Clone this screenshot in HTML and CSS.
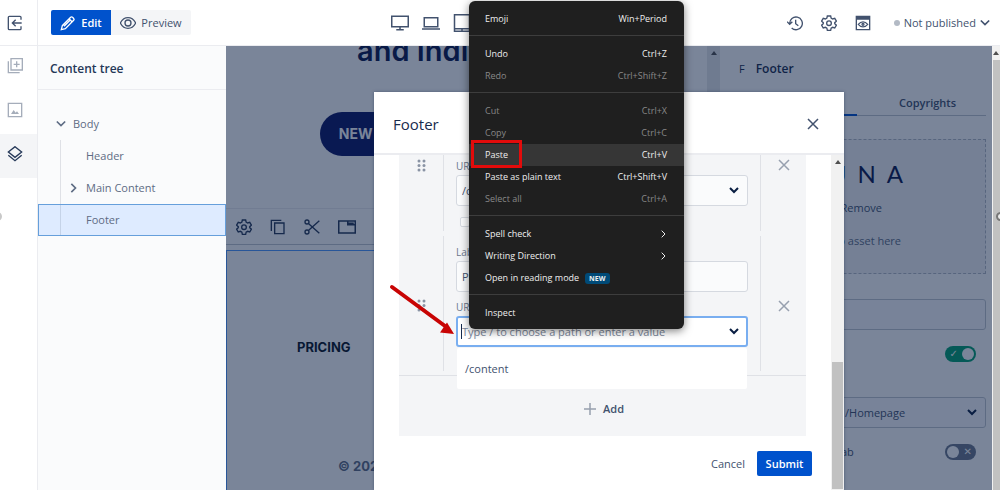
FILE: index.html
```
<!DOCTYPE html>
<html lang="en">
<head>
    <meta charset="utf-8">
    <title>Content editor</title>
    <link rel="stylesheet" href="styles.css">
</head>
<body>
<div class="app">
    <header class="topbar">
        <div class="topbar-exit">
            <button class="icon-btn" aria-label="Exit">
                <svg class="icon" viewBox="0 0 24 24"><path d="M21 7V3.500a1.500 1.500 0 0 0-1.500-1.500H3.500A1.500 1.500 0 0 0 2 3.500v17A1.500 1.500 0 0 0 3.500 22h16a1.500 1.500 0 0 0 1.500-1.500V17M22 12H8M13 7l-5 5 5 5"/></svg>
            </button>
        </div>
        <div class="mode">
            <button class="mode-btn active">
                <svg class="icon" viewBox="0 0 24 24"><path d="M2 22l1.500-6L16 3.500a2 2 0 0 1 2.800 0l1.700 1.700a2 2 0 0 1 0 2.800L8 20.500zM14 6l4 4M6 17l9-9"/></svg>
                Edit
            </button>
            <button class="mode-btn">
                <svg class="icon" viewBox="0 0 24 24"><path d="M0.500 12C3 7 7 4 12 4s9 3 11.500 8c-2.500 5-6.500 8-11.500 8S3 17 .5 12z"/><circle cx="12" cy="12" r="4.500"/></svg>
                Preview
            </button>
        </div>
        <div class="devices">
            <button class="icon-btn" aria-label="Desktop"><svg class="icon big" viewBox="0 0 24 24"><path d="M1 3h22v14H1zM12 17v4M7 21h10"/></svg></button>
            <button class="icon-btn" aria-label="Laptop"><svg class="icon big" viewBox="0 0 24 24"><path d="M3 5h18v12H3zM0 20h24"/></svg></button>
            <button class="icon-btn" aria-label="Tablet"><svg class="icon big" viewBox="0 0 24 24"><path d="M2 1h20v22H2zM2 19.500h20M11 21h2"/></svg></button>
        </div>
        <div class="actions">
            <button class="icon-btn" aria-label="History"><svg class="icon" viewBox="0 0 24 24"><path d="M4 13a9.500 9.500 0 1 1 3 6.500M0 10l4 4 4-4M13 7v6l4 3"/></svg></button>
            <button class="icon-btn" aria-label="Settings"><svg class="icon" viewBox="0 0 24 24"><use href="#gear"/></svg></button>
            <button class="icon-btn" aria-label="View"><svg class="icon" viewBox="0 0 24 24"><path d="M2 2h20v20H2zM2 4h20M2 6h20M5 14c4-5 10-5 14 0-4 5-10 5-14 0z"/><circle cx="12" cy="14" r="1.500"/></svg></button>
            <button class="status"><span class="dot"></span>Not published
                <svg class="icon chevron" viewBox="0 0 12 12"><path d="M1 3l5 5 5-5"/></svg>
            </button>
        </div>
    </header>

    <div class="workspace">
        <nav class="rail">
            <button class="rail-btn" aria-label="Components"><svg class="icon" viewBox="0 0 24 24"><path d="M6 1h17v17H6zM2 5v17h17M14.500 5v9M10 9.500h9"/></svg></button>
            <button class="rail-btn" aria-label="Assets"><svg class="icon" viewBox="0 0 24 24"><path d="M2 2h20v20H2z"/><path class="solid" d="M6 18l4-6 3 4 2-2 3 4z"/></svg></button>
            <button class="rail-btn active" aria-label="Content tree"><svg class="icon" viewBox="0 0 24 24"><path d="M12 1l10 8-10 8L2 9zM2 14l10 8 10-8"/></svg></button>
            <span class="grip grip-left"></span>
        </nav>

        <aside class="tree">
            <h2 class="tree-title">Content tree</h2>
            <ul class="tree-list">
                <li class="tree-item root"><svg class="icon chevron" viewBox="0 0 12 12"><path d="M1 3l5 5 5-5"/></svg>Body</li>
                <li class="tree-item">Header</li>
                <li class="tree-item"><svg class="icon chevron" viewBox="0 0 12 12"><path d="M4 1l5 5-5 5"/></svg>Main Content</li>
                <li class="tree-item selected">Footer</li>
            </ul>
        </aside>

        <main class="stage">
            <section class="canvas">
                <h1 class="hero-title">and Indivi</h1>
                <a class="hero-link" href="#">NEW</a>
                <div class="tools">
                    <button class="icon-btn" aria-label="Edit"><svg class="icon" viewBox="0 0 24 24"><use href="#gear"/></svg></button>
                    <button class="icon-btn" aria-label="Copy"><svg class="icon" viewBox="0 0 24 24"><path d="M7 6h14v16H7zM2 18V2h15"/></svg></button>
                    <button class="icon-btn" aria-label="Cut"><svg class="icon" viewBox="0 0 24 24"><circle cx="4.500" cy="4.500" r="3"/><circle cx="4.500" cy="19.500" r="3"/><path d="M7 7l16 14.500M7 17L23 2.500"/></svg></button>
                    <button class="icon-btn" aria-label="Panel"><svg class="icon big" viewBox="0 0 24 24"><path d="M1 4h22v16H1zM13 5v4h9M14 7h7"/></svg></button>
                </div>
                <div class="page-footer">
                    <a class="footer-link" href="#">PRICING</a>
                    <p class="copyright">© 202</p>
                </div>
            </section>
            <div class="scrollbar canvas-scroll"><i class="arrow-up"></i></div>
            <section class="panel">
                <h2 class="panel-title"><span class="panel-type">F</span>Footer</h2>
                <div class="tabs">
                    <span class="tab active"></span>
                    <button class="tab">Copyrights</button>
                </div>
                <div class="dropzone">
                    <div class="wordmark"><span>U</span><span>N</span><span>A</span></div>
                    <button class="remove">Remove</button>
                    <p class="drop-hint">drop asset here</p>
                </div>
                <input class="panel-field" type="text" aria-label="Title">
                <label class="switch-row first"><input class="switch" type="checkbox" checked aria-label="Show logo"></label>
                <span class="select-wrap">
                    <select class="panel-field indent" aria-label="Logo link"><option>/Homepage</option></select>
                    <svg class="icon select-arrow" viewBox="0 0 12 12"><path d="M2 4l4 4 4-4"/></svg>
                </span>
                <label class="switch-row">tab<input class="switch" type="checkbox"></label>
            </section>

            <div class="overlay">
                <div class="modal" role="dialog" aria-label="Footer">
                    <header class="modal-head">
                        <h2 class="modal-title">Footer</h2>
                        <button class="icon-btn" aria-label="Close"><svg class="icon close" viewBox="0 0 12 12"><path d="M1 1l10 10M11 1L1 11"/></svg></button>
                    </header>
                    <div class="modal-body">
                        <form class="modal-form">
                            <div class="group">
                                <div class="link-row cut">
                                    <div class="handle"><svg class="dots" viewBox="0 0 9 13"><use href="#dots"/></svg></div>
                                    <div class="fields">
                                        <label class="field-label" for="url-1">URL</label>
                                        <span class="select-wrap">
                                            <select class="field" id="url-1"><option>/content</option></select>
                                            <svg class="icon select-arrow" viewBox="0 0 12 12"><path d="M2 4l4 4 4-4"/></svg>
                                        </span>
                                        <input class="tick" type="checkbox" aria-label="Open in new tab">
                                    </div>
                                    <button type="button" class="delete" aria-label="Delete"><svg class="icon close" viewBox="0 0 12 12"><path d="M1 1l10 10M11 1L1 11"/></svg></button>
                                </div>
                                <div class="link-row">
                                    <div class="handle"><svg class="dots" viewBox="0 0 9 13"><use href="#dots"/></svg></div>
                                    <div class="fields">
                                        <label class="field-label" for="label-2">Label</label>
                                        <input class="field" id="label-2" type="text" value="Pricing">
                                        <label class="field-label second" for="url-2">URL</label>
                                        <span class="select-wrap focus">
                                            <input class="field" id="url-2" type="text" placeholder="Type / to choose a path or enter a value">
                                            <svg class="icon select-arrow" viewBox="0 0 12 12"><path d="M2 4l4 4 4-4"/></svg>
                                            <span class="suggestions">/content</span>
                                        </span>
                                    </div>
                                    <button type="button" class="delete" aria-label="Delete"><svg class="icon close" viewBox="0 0 12 12"><path d="M1 1l10 10M11 1L1 11"/></svg></button>
                                </div>
                                <button type="button" class="add"><svg class="icon close" viewBox="0 0 12 12"><path d="M6 0v12M0 6h12"/></svg>Add</button>
                            </div>
                            <div class="modal-actions">
                                <button type="button" class="cancel">Cancel</button>
                                <button type="button" class="submit">Submit</button>
                            </div>
                        </form>
                        <div class="scrollbar modal-scroll"><i class="arrow-up"></i><i class="thumb"></i></div>
                    </div>
                </div>
            </div>
        </main>
        <div class="scrollbar window-scroll"><i class="arrow-up"></i><i class="thumb"></i><span class="grip grip-right"></span></div>
    </div>
</div>

<svg class="pointer" viewBox="0 0 70 55">
    <path class="pointer-line" d="M5 6L58 45"/>
    <path class="pointer-head" d="M67 53L53 51.500 60 41.500z"/>
</svg>

<ul class="menu">
    <li class="menu-item">Emoji<kbd>Win+Period</kbd></li>
    <li class="menu-sep"></li>
    <li class="menu-item">Undo<kbd>Ctrl+Z</kbd></li>
    <li class="menu-item off">Redo<kbd>Ctrl+Shift+Z</kbd></li>
    <li class="menu-sep"></li>
    <li class="menu-item off">Cut<kbd>Ctrl+X</kbd></li>
    <li class="menu-item off">Copy<kbd>Ctrl+C</kbd></li>
    <li class="menu-item hover">Paste<kbd>Ctrl+V</kbd><span class="marker"></span></li>
    <li class="menu-item">Paste as plain text<kbd>Ctrl+Shift+V</kbd></li>
    <li class="menu-item off">Select all<kbd>Ctrl+A</kbd></li>
    <li class="menu-sep"></li>
    <li class="menu-item">Spell check<svg class="icon menu-arrow" viewBox="0 0 12 12"><path d="M4 1l5 5-5 5"/></svg></li>
    <li class="menu-item">Writing Direction<svg class="icon menu-arrow" viewBox="0 0 12 12"><path d="M4 1l5 5-5 5"/></svg></li>
    <li class="menu-item">Open in reading mode<span class="badge">NEW</span></li>
    <li class="menu-sep"></li>
    <li class="menu-item">Inspect</li>
</ul>

<svg class="defs" aria-hidden="true">
    <defs>
        <g id="gear">
            <path d="M9.500 1.500h5l.7 3.200 2.200 1.300 3.200-1 2.500 4.200-2.500 2.300v1.500l2.500 2.300-2.500 4.200-3.200-1-2.200 1.300-.7 3.200h-5l-.7-3.200L6.600 18.500l-3.200 1-2.500-4.200L3.400 13v-1.500L.9 9.200 3.400 5l3.200 1 2.200-1.300z"/>
            <circle cx="12" cy="12.300" r="3.500"/>
        </g>
        <g id="dots">
            <circle cx="2" cy="2" r="1.500"/><circle cx="7" cy="2" r="1.500"/>
            <circle cx="2" cy="6.500" r="1.500"/><circle cx="7" cy="6.500" r="1.500"/>
            <circle cx="2" cy="11" r="1.500"/><circle cx="7" cy="11" r="1.500"/>
        </g>
    </defs>
</svg>
</body>
</html>
```
FILE: styles.css
```
* {
    box-sizing: border-box;
}

body {
    margin: 0;
    font: 11px/16px "Open Sans", "Noto Sans", sans-serif;
    color: #42526e;
    background: #fff;
    overflow: hidden;
}

h1, h2, p, ul {
    margin: 0;
    padding: 0;
    list-style: none;
}

button, input, select {
    font: inherit;
    color: inherit;
    border: 0;
    padding: 0;
    background: none;
}

.app {
    display: flex;
    flex-direction: column;
    height: 100vh;
}

.icon {
    display: block;
    width: 16px;
    height: 16px;
    flex: none;
    fill: none;
    stroke: currentColor;
    stroke-width: 2;
}

.icon.big {
    width: 18px;
    height: 18px;
}

.icon.chevron {
    width: 10px;
    height: 10px;
}

.icon.close {
    width: 12px;
    height: 12px;
    stroke-width: 1.500;
}

.icon .solid {
    fill: currentColor;
    stroke: none;
}

.icon-btn {
    display: flex;
}

.defs {
    position: absolute;
    width: 0;
    height: 0;
}

/* top bar */
.topbar {
    display: flex;
    align-items: center;
    flex: none;
    height: 46px;
    border-bottom: 1px solid #ebecf0;
}

.topbar-exit {
    display: flex;
    align-items: center;
    align-self: stretch;
    width: 38px;
    padding-left: 7px;
    border-right: 1px solid #ebecf0;
}

.mode {
    display: flex;
    margin-left: 13px;
    border-radius: 2px;
    overflow: hidden;
}

.mode-btn {
    display: flex;
    align-items: center;
    justify-content: center;
    gap: 5px;
    width: 80px;
    height: 25px;
    background: #f4f5f7;
}

.mode-btn.active {
    width: 60px;
    font-weight: 600;
    color: #fff;
    background: #0052cc;
}

.devices {
    display: flex;
    gap: 13px;
    margin-left: 200px;
}

.actions {
    display: flex;
    align-items: center;
    gap: 18px;
    margin-left: auto;
    padding-right: 10px;
}

.status {
    display: flex;
    align-items: center;
    gap: 4px;
    margin-left: 5px;
}

.dot {
    width: 6px;
    height: 6px;
    border-radius: 50%;
    background: #b3bac5;
}

.workspace {
    display: flex;
    flex: 1;
    min-height: 0;
}

/* left rail */
.rail {
    position: relative;
    flex: none;
    width: 38px;
    border-right: 1px solid #ebecf0;
}

.rail-btn {
    display: flex;
    align-items: center;
    width: 100%;
    height: 44px;
    padding: 0 0 4px 7px;
    color: #a5adba;
}

.rail-btn.active {
    color: #253858;
    background: #f4f5f7;
}

.grip {
    position: absolute;
    top: 166px;
    width: 9px;
    height: 9px;
    border: 2px solid #c8c8c8;
    border-radius: 50%;
    background: #eee;
}

.grip-left {
    left: -7px;
}

.grip-right {
    right: -5px;
    border-color: #777;
}

/* content tree */
.tree {
    flex: none;
    width: 188px;
    background: #fafbfc;
}

.tree-title {
    height: 44px;
    padding-left: 12px;
    border-bottom: 1px solid #ebecf0;
    font-size: 12px;
    line-height: 46px;
    font-weight: 600;
    color: #253858;
}

.tree-list {
    padding-top: 18px;
    color: #5e6c84;
}

.tree-item {
    position: relative;
    display: flex;
    align-items: center;
    height: 32px;
    padding-left: 48px;
}

.tree-item.root {
    padding-left: 18px;
    gap: 7px;
}

.tree-item:not(.root)::before {
    content: "";
    position: absolute;
    left: 22px;
    top: 0;
    bottom: 0;
    border-left: 1px solid #dfe1e6;
}

.tree-item:not(.root) .chevron {
    margin-left: -18px;
    margin-right: 8px;
}

.tree-item.selected {
    padding-left: 47px;
    border: 1px solid #669fdb;
    background: #deebff;
}

.tree-item.selected::before {
    left: 21px;
    border-color: #c5d3e8;
}

/* page preview */
.stage {
    position: relative;
    display: flex;
    flex: 1;
    min-width: 0;
    overflow: hidden;
}

.canvas {
    display: flex;
    flex-direction: column;
    flex: 1;
    min-width: 0;
    font-family: Inter, "Open Sans", sans-serif;
    font-weight: 700;
}

.hero-title {
    margin-top: -15px;
    padding-left: 131px;
    font-size: 29px;
    line-height: 40px;
    font-weight: 600;
    white-space: nowrap;
    color: #09164e;
}

.hero-link {
    width: 61%;
    height: 44px;
    margin: 41px auto 0;
    padding-left: 19px;
    border-radius: 22px;
    font-size: 14px;
    line-height: 44px;
    color: #fff;
    text-decoration: none;
    background: #0a1464;
}

.tools {
    display: flex;
    align-items: center;
    gap: 18px;
    height: 37px;
    margin-top: 52px;
    padding-left: 10px;
    border-top: 1px solid #ebecf0;
    border-bottom: 1px solid #c1c7d0;
    color: #253858;
}

.page-footer {
    flex: 1;
    margin-top: 5px;
    border-top: 1px solid #4c9aff;
    border-left: 1px solid #4c9aff;
    font-size: 13px;
    color: #172b4d;
}

.footer-link {
    display: block;
    margin: 88px 0 0 70px;
    color: #071323;
    text-decoration: none;
}

.copyright {
    margin: 103px 0 0 111px;
    color: #5e6c84;
}

.scrollbar {
    position: relative;
    display: flex;
    flex-direction: column;
    align-items: center;
    flex: none;
    width: 13px;
    background: #f1f1f1;
}

.arrow-up {
    margin: 5px 0;
    border: 3px solid transparent;
    border-top: 0;
    border-bottom: 4px solid #505050;
}

.thumb {
    width: 11px;
    background: #c1c1c1;
}

.canvas-scroll {
    background: #e8e9ec;
}

.window-scroll {
    width: 8px;
    overflow: hidden;
}

.window-scroll .thumb {
    flex: 1;
    width: 7px;
}

/* right panel */
.panel {
    flex: none;
    width: 272px;
    padding: 0 6px 0 19px;
}

.panel-title {
    display: flex;
    gap: 11px;
    font-size: 12px;
    line-height: 46px;
    font-weight: 600;
    color: #172b4d;
}

.panel-type {
    font-size: 11px;
    font-weight: 400;
}

.tabs {
    display: flex;
    height: 24px;
    border-bottom: 1px solid #c1c7d0;
}

.tab {
    flex: 1;
    height: 24px;
    padding: 0 0 2px 12px;
    font-weight: 600;
}

.tab.active {
    flex: 0 0 118px;
    border-bottom: 2px solid #0052cc;
}

.dropzone {
    height: 135px;
    margin-top: 23px;
    padding-top: 19px;
    border: 1px dashed #b3bac5;
    text-align: right;
    background: #f4f5f7;
}

.wordmark {
    display: flex;
    justify-content: flex-end;
    gap: 11px;
    padding-right: 82px;
    font: 24px/30px Lato, sans-serif;
    color: #09164e;
}

.remove {
    margin-top: 11px;
    padding-right: 103px;
}

.drop-hint {
    margin-top: 17px;
    padding-right: 84px;
    color: #5e6c84;
}

.panel-field {
    width: 100%;
    height: 31px;
    padding: 0 8px;
    border: 1px solid #c1c7d0;
    border-radius: 3px;
    background: #fafbff;
}

.dropzone + .panel-field {
    margin-top: 25px;
}

.switch-row {
    display: flex;
    align-items: center;
    height: 48px;
    padding-right: 10px;
    padding-left: 98px;
}

.switch-row.first {
    margin-bottom: 19px;
}

.switch {
    position: relative;
    appearance: none;
    width: 31px;
    height: 16px;
    margin: 0 0 0 auto;
    border-radius: 8px;
    background: #6b778c;
}

.switch::before {
    content: "";
    position: absolute;
    top: 2px;
    left: 2px;
    width: 12px;
    height: 12px;
    border-radius: 50%;
    background: #fff;
}

.switch::after {
    content: "✕";
    position: absolute;
    right: 4px;
    font: 10px/16px "DejaVu Sans", sans-serif;
    color: #fff;
}

.switch:checked {
    background: #00a070;
}

.switch:checked::before {
    left: 17px;
}

.switch:checked::after {
    content: "✓";
    right: 18px;
}

.select-wrap {
    position: relative;
    display: block;
}

.select-wrap select {
    appearance: none;
}

.select-wrap .indent {
    padding-left: 105px;
}

.select-arrow {
    position: absolute;
    right: 8px;
    top: 9px;
    width: 12px;
    height: 12px;
    color: #091e42;
    pointer-events: none;
}

/* dialog */
.overlay {
    position: absolute;
    inset: 0;
    display: flex;
    justify-content: center;
    padding-top: 46px;
    background: rgba(9, 30, 66, 0.54);
}

.modal {
    display: flex;
    flex-direction: column;
    width: 470px;
    background: #fff;
    box-shadow: 0 0 3px rgba(9, 30, 66, 0.4);
}

.modal-head {
    display: flex;
    align-items: center;
    justify-content: space-between;
    flex: none;
    height: 63px;
    padding: 2px 25px 0 19px;
    border-bottom: 2px solid #ebecf0;
}

.modal-title {
    font-size: 15px;
    font-weight: 400;
    color: #172b4d;
}

.modal-body {
    display: flex;
    flex: 1;
    min-height: 0;
}

.modal-form {
    flex: 1;
    min-width: 0;
    padding: 0 25px;
}

.group {
    background: #f4f5f7;
}

.link-row {
    display: flex;
    height: 145px;
    padding: 5px 0 4px;
    border-bottom: 1px solid #dfe1e6;
}

.link-row.cut {
    height: 76px;
    padding: 0;
    border-bottom: 0;
}

.handle {
    display: flex;
    align-items: center;
    justify-content: center;
    width: 44px;
    padding-top: 4px;
    flex: none;
}

.dots {
    width: 9px;
    height: 13px;
    fill: #8993a4;
}

.link-row.cut .handle,
.link-row.cut .delete {
    align-items: flex-start;
}

.fields {
    flex: 1;
    min-width: 0;
    padding: 8px 12px 0;
    border-left: 1px solid #dfe1e6;
    border-right: 1px solid #dfe1e6;
}

.link-row.cut .fields {
    padding-top: 3px;
}

.field-label {
    display: block;
    margin-bottom: 1px;
    font-size: 10px;
    color: #6b778c;
}

.field-label.second {
    margin-top: 7px;
}

.field {
    display: block;
    width: 100%;
    height: 31px;
    padding: 0 5px;
    border: 1px solid #d5d9e0;
    border-radius: 3px;
    background: #fafbfc;
}

.focus .field {
    border: 2px solid #79aef0;
    padding: 0 4px;
    background: #fff;
}

/* text cursor */
.focus::before {
    content: "";
    position: absolute;
    left: 5px;
    top: 8px;
    height: 15px;
    border-left: 1px solid #172b4d;
}

.field::placeholder {
    color: #7a869a;
}

.suggestions {
    position: absolute;
    top: 32px;
    left: 1px;
    right: 1px;
    padding: 13px 8px 12px;
    border-radius: 2px;
    background: #fff;
}

.tick {
    display: block;
    appearance: none;
    width: 10px;
    height: 10px;
    margin: 11px 0 0 4px;
    border: 1px solid #d5d9e0;
    border-radius: 2px;
    background: #fafbfc;
}

.delete {
    display: flex;
    align-items: center;
    justify-content: center;
    width: 45px;
    padding-top: 4px;
    flex: none;
    color: #97a0af;
}

.add {
    display: flex;
    align-items: center;
    justify-content: center;
    gap: 7px;
    width: 100%;
    height: 60px;
    padding: 6px 0 0 3px;
    font-weight: 600;
}

.add .icon {
    color: #97a0af;
}

.modal-actions {
    display: flex;
    justify-content: flex-end;
    gap: 12px;
    padding-top: 15px;
}

.submit {
    width: 55px;
    height: 25px;
    margin-right: -6px;
    border-radius: 2px;
    font-weight: 600;
    color: #fff;
    background: #0052cc;
}

.modal-scroll {
    justify-content: space-between;
}

.modal-scroll .thumb {
    height: 38%;
    margin-bottom: 1px;
}

/* browser context menu */
.menu {
    position: absolute;
    left: 469px;
    top: 1px;
    width: 215px;
    padding: 7px 0 5px;
    border-radius: 6px;
    font-size: 9px;
    color: #eee;
    background: #1f1f1f;
    box-shadow: 0 2px 8px rgba(0, 0, 0, 0.5);
}

.menu-item {
    position: relative;
    display: flex;
    align-items: center;
    height: 22px;
    padding: 0 17px 0 16px;
}

.menu-item kbd {
    margin-left: auto;
    font: inherit;
}

.menu-item.off {
    color: #888;
}

.menu-item.hover {
    background: #363636;
}

.menu-sep {
    height: 1px;
    margin: 5px 0 7px;
    background: #3d3d3d;
}

.menu-arrow {
    width: 8px;
    height: 8px;
    margin-left: auto;
    stroke-width: 1.500;
}

.badge {
    margin-left: 6px;
    padding: 0 4px;
    border-radius: 3px;
    font-size: 7px;
    line-height: 11px;
    font-weight: 700;
    background: #004a77;
}

/* red annotations */
.marker {
    position: absolute;
    left: 2px;
    top: -4px;
    width: 51px;
    height: 28px;
    border: 3px solid #e30b0b;
}

.pointer {
    position: absolute;
    left: 387px;
    top: 281px;
    width: 70px;
    height: 55px;
}

.pointer-line {
    fill: none;
    stroke: #c80404;
    stroke-width: 4;
    stroke-linecap: round;
}

.pointer-head {
    fill: #c80404;
}
```
